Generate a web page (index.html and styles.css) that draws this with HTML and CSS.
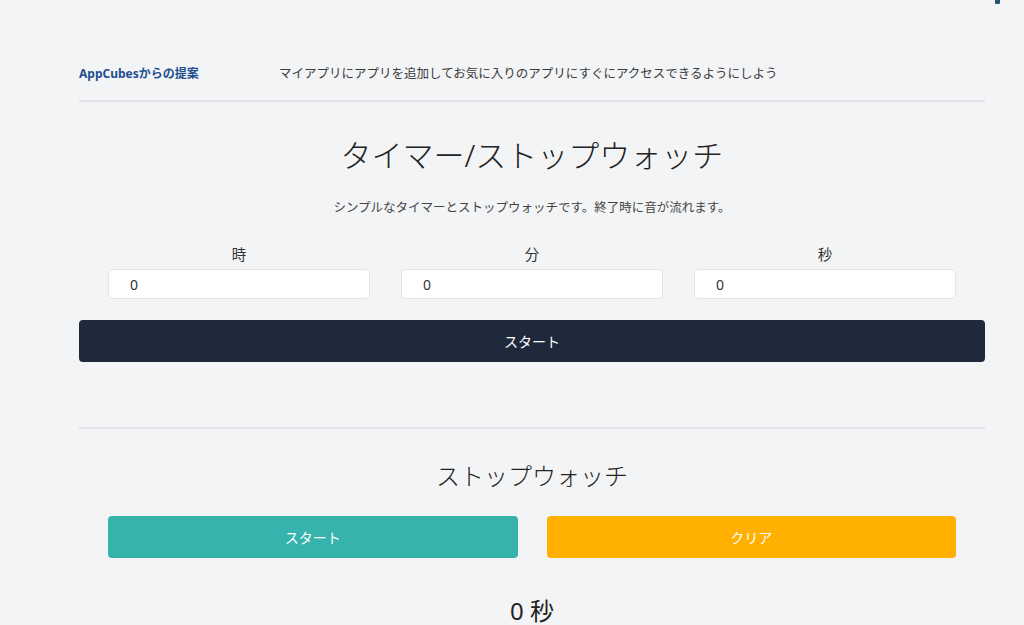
FILE: index.html
```html
<!DOCTYPE html>
<html lang="ja">
<head>
  <meta charset="UTF-8">
  <meta name="viewport" content="width=device-width, initial-scale=1.0">
  <title>タイマー/ストップウォッチ</title>
  <link rel="stylesheet" href="styles.css">
</head>
<body>
  <div class="corner-mark"></div>
  <div class="page">
    <div class="suggest">
      <span class="suggest-from">AppCubesからの提案</span>
      <span class="suggest-text">マイアプリにアプリを追加してお気に入りのアプリにすぐにアクセスできるようにしよう</span>
    </div>

    <section class="timer">
      <h1 class="title">タイマー/ストップウォッチ</h1>
      <p class="lead">シンプルなタイマーとストップウォッチです。終了時に音が流れます。</p>
      <div class="fields">
        <div class="field">
          <label for="hours">時</label>
          <input type="text" id="hours" value="0">
        </div>
        <div class="field">
          <label for="minutes">分</label>
          <input type="text" id="minutes" value="0">
        </div>
        <div class="field">
          <label for="seconds">秒</label>
          <input type="text" id="seconds" value="0">
        </div>
      </div>
      <button class="btn btn-dark" type="button">スタート</button>
    </section>

    <section class="stopwatch">
      <h2 class="sub-title">ストップウォッチ</h2>
      <div class="sw-buttons">
        <button class="btn btn-teal" type="button">スタート</button>
        <button class="btn btn-amber" type="button">クリア</button>
      </div>
      <div class="elapsed">0 秒</div>
    </section>
  </div>
</body>
</html>
```

FILE: styles.css
```css
* {
  font-family: "Noto Sans", "Noto Sans CJK JP", sans-serif;
  box-sizing: border-box;
}

body {
  margin: 0;
  background-color: #f3f4f6;
  color: #333;
}

.corner-mark {
  position: absolute;
  top: 0;
  left: 995px;
  width: 5px;
  height: 4px;
  background: #2a5470;
  border-radius: 0 0 1px 1px;
}

.page {
  width: 906px;
  margin-left: 79px;
  padding-top: 63px;
}

.suggest {
  display: flex;
  align-items: center;
  padding-bottom: 18px;
  border-bottom: 2px solid #e2e3e6;
}

.suggest-from {
  width: 200px;
  font-size: 12px;
  font-weight: 700;
  color: #1f4f8f;
}

.suggest-text {
  font-size: 12.5px;
  color: #3a3a3a;
}

.timer {
  text-align: center;
  padding-bottom: 65px;
  border-bottom: 2px solid #e2e3e6;
}

.title {
  margin: 29px 0 0;
  font-size: 31px;
  font-weight: 300;
  color: #222;
  line-height: 48px;
}

.lead {
  margin: 18px 0 0;
  font-size: 12.5px;
  color: #444;
}

.fields {
  display: grid;
  grid-template-columns: repeat(3, 1fr);
  gap: 31px;
  padding: 0 29px;
  margin-top: 27px;
}

.field label {
  display: block;
  font-size: 14.5px;
  color: #333;
  margin-bottom: 5px;
}

.field input {
  width: 100%;
  height: 30px;
  padding: 0 21px;
  border: 1px solid #e3e4e8;
  border-radius: 4px;
  background: #fff;
  font-size: 14px;
  color: #333;
}

.btn {
  display: block;
  width: 100%;
  height: 42px;
  border: none;
  border-radius: 4px;
  color: #fff;
  font-size: 14px;
  cursor: pointer;
}

.btn-dark {
  margin-top: 21px;
  background-color: #1e293b;
}

.stopwatch {
  text-align: center;
}

.sub-title {
  margin: 29px 0 0;
  font-size: 24px;
  font-weight: 300;
  color: #222;
  line-height: 36px;
}

.sw-buttons {
  display: grid;
  grid-template-columns: 1fr 1fr;
  gap: 29px;
  padding: 0 29px;
  margin-top: 22px;
}

.btn-teal {
  background-color: #35b3ac;
}

.btn-amber {
  background-color: #ffb000;
}

.elapsed {
  margin-top: 34px;
  font-size: 24px;
  color: #222;
}
```
